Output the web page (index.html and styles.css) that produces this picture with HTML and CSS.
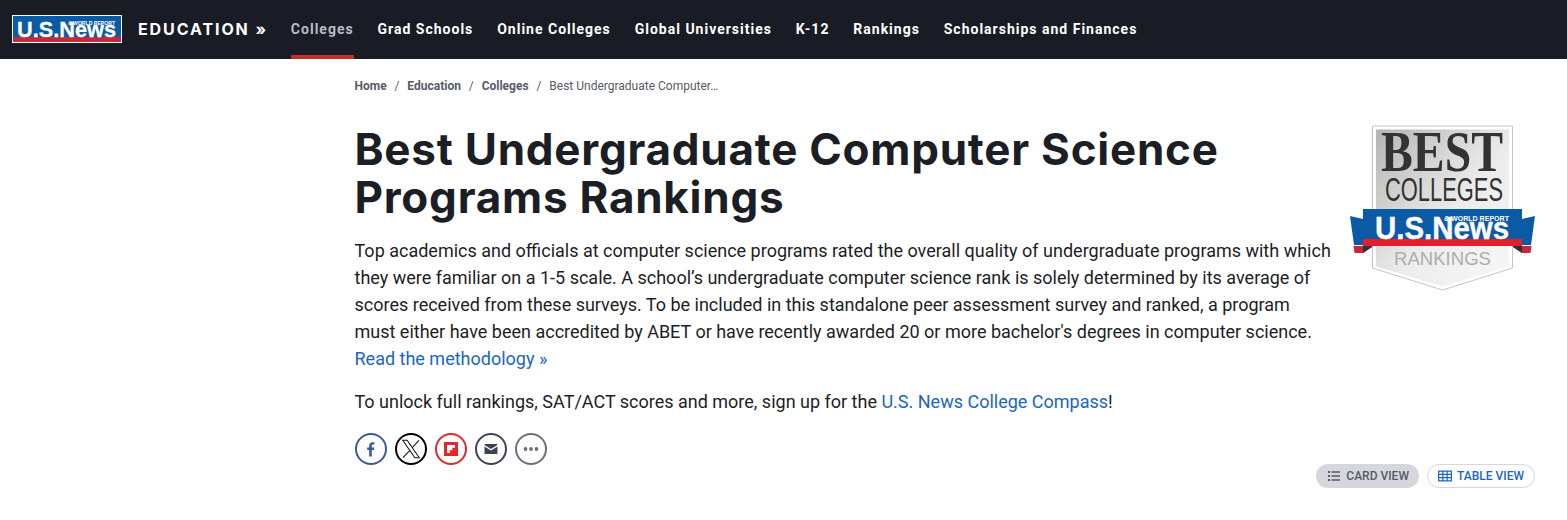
FILE: index.html
```html
<!DOCTYPE html>
<html lang="en">
<head>
    <meta charset="UTF-8">
    <title>Best Undergraduate Computer Science Programs Rankings</title>
    <link rel="stylesheet" href="styles.css">
</head>
<body>
    <header class="topbar">
        <svg class="logo" width="110" height="28" viewBox="0 0 110 28">
            <rect x="0.5" y="0.5" width="109" height="27" fill="#0b5aa5" stroke="#fff"/>
            <rect x="1" y="22" width="108" height="5" fill="#c8283a"/>
            <text x="5" y="22" class="logo-main" textLength="99" lengthAdjust="spacingAndGlyphs">U.S.News</text>
            <text x="56" y="10" class="logo-small" textLength="47" lengthAdjust="spacingAndGlyphs">&amp; WORLD REPORT</text>
        </svg>
        <div class="section-name">EDUCATION »</div>
        <nav class="main-nav">
            <a class="active" href="#">Colleges</a>
            <a href="#">Grad Schools</a>
            <a href="#">Online Colleges</a>
            <a href="#">Global Universities</a>
            <a href="#">K-12</a>
            <a href="#">Rankings</a>
            <a href="#">Scholarships and Finances</a>
        </nav>
    </header>

    <main class="page">
        <div class="breadcrumb">
            <a href="#">Home</a><span class="sep">/</span>
            <a href="#">Education</a><span class="sep">/</span>
            <a href="#">Colleges</a><span class="sep">/</span>
            <span class="current">Best Undergraduate Computer…</span>
        </div>

        <div class="intro">
            <div class="intro-text">
                <h1>Best Undergraduate Computer Science Programs Rankings</h1>
                <p>Top academics and officials at computer science programs rated the overall quality of undergraduate programs with which they were familiar on a 1-5 scale. A school’s undergraduate computer science rank is solely determined by its average of scores received from these surveys. To be included in this standalone peer assessment survey and ranked, a program must either have been accredited by ABET or have recently awarded 20 or more bachelor's degrees in computer science. <a href="#">Read the methodology »</a></p>
                <p>To unlock full rankings, SAT/ACT scores and more, sign up for the <a href="#">U.S. News College Compass</a>!</p>
                <div class="share">
                    <a class="share-btn fb" href="#">
                        <svg width="18" height="18" viewBox="0 0 18 18"><path fill="#3b5998" d="M7.200 16.500V9.900H5.200V7.400h2V5.700C7.200 3.500 8.500 2.200 10.500 2.200c.9 0 1.600.1 1.900.1v2.300h-1.300c-1.100 0-1.300.5-1.300 1.200v1.600h2.500l-.3 2.500H9.800v6.600z"/></svg>
                    </a>
                    <a class="share-btn x" href="#">
                        <svg width="22" height="22" viewBox="0 0 24 24"><path fill="none" stroke="#111" stroke-width="1.100" d="M3 2.500h4.800l13.200 19h-4.800zM20.600 2.500 13.200 10.800M10.800 13.400 3.200 21.500"/></svg>
                    </a>
                    <a class="share-btn flip" href="#">
                        <svg width="14" height="14" viewBox="0 0 14 14"><rect width="14" height="14" fill="#e12828"/><path fill="#fff" d="M3 3h8v2.700H8.300v2.600H5.700V11H3z"/></svg>
                    </a>
                    <a class="share-btn mail" href="#">
                        <svg width="14" height="12" viewBox="0 0 14 12"><path fill="#3e4354" d="M1.500 1h11c.5 0 1 .4 1 1L7 6 .5 2c0-.6.5-1 1-1zM.5 3.500 7 7.500l6.500-4V10c0 .6-.5 1-1 1h-11c-.5 0-1-.4-1-1z"/></svg>
                    </a>
                    <a class="share-btn more" href="#">
                        <svg width="16" height="4" viewBox="0 0 16 4"><circle cx="2.500" cy="2" r="1.900" fill="#6b6f7b"/><circle cx="8" cy="2" r="1.900" fill="#6b6f7b"/><circle cx="13.500" cy="2" r="1.900" fill="#6b6f7b"/></svg>
                    </a>
                </div>
            </div>

            <div class="side">
                <svg class="badge" width="186" height="166" viewBox="0 0 186 166">
                    <defs>
                        <linearGradient id="silver" x1="0" y1="0" x2="1" y2="1">
                            <stop offset="0" stop-color="#b4b4b2"/>
                            <stop offset="0.55" stop-color="#ececec"/>
                            <stop offset="1" stop-color="#f8f8f8"/>
                        </linearGradient>
                    </defs>
                    <path d="M22.500 1h140v142l-70 22-70-22z" fill="#fff" stroke="#c4c4c4"/>
                    <path d="M26 4.500h133v137l-66.500 20-66.500-20z" fill="url(#silver)"/>
                    <text x="31" y="46" class="badge-best" textLength="122" lengthAdjust="spacingAndGlyphs">BEST</text>
                    <text x="35" y="76" class="badge-colleges" textLength="118" lengthAdjust="spacingAndGlyphs">COLLEGES</text>
                    <path d="M0 91l13 3v26H4z" fill="#0b5aa5"/>
                    <path d="M185 91l-13 3v26h9z" fill="#0b5aa5"/>
                    <path d="M3.500 121H13v1l9 0-9 6H4.500z" fill="#c8283a"/>
                    <path d="M181.500 121H172v1l-9 0 9 6h8.500z" fill="#c8283a"/>
                    <path d="M13 121h9v1l-9 6zM172 121h-9v1l9 6z" fill="#333"/>
                    <rect x="13" y="84" width="159" height="30" fill="#0b5aa5"/>
                    <rect x="13" y="114" width="159" height="7" fill="#e2202c"/>
                    <text x="25" y="114" class="badge-news" textLength="134" lengthAdjust="spacingAndGlyphs">U.S.News</text>
                    <text x="94" y="96" class="badge-small" textLength="65" lengthAdjust="spacingAndGlyphs">&amp; WORLD REPORT</text>
                    <text x="44" y="140" class="badge-rankings" textLength="97" lengthAdjust="spacingAndGlyphs">RANKINGS</text>
                </svg>
                <div class="view-toggle">
                    <a class="view-btn card" href="#">
                        <svg width="12" height="10" viewBox="0 0 12 10"><path fill="#565b69" d="M0 0h2v2H0zM3.500 .2H12v1.600H3.500zM0 4h2v2H0zM3.500 4.200H12v1.600H3.500zM0 8h2v2H0zM3.500 8.200H12v1.600H3.500z"/></svg>
                        CARD VIEW
                    </a>
                    <a class="view-btn table" href="#">
                        <svg width="14" height="12" viewBox="0 0 15 12"><path fill="none" stroke="#1a66c4" stroke-width="1.300" d="M.7.700h13.600v10.600H.7zM.7 4.200h13.600M.7 7.800h13.600M5.200.7v10.600M9.800.7v10.600"/></svg>
                        TABLE VIEW
                    </a>
                </div>
            </div>
        </div>
    </main>
</body>
</html>
```

FILE: styles.css
```css
body {
    margin: 0;
    font-family: Roboto, Arial, sans-serif;
    color: #1c1e26;
    background-color: #fff;
}
a {
    text-decoration: none;
}

/* top bar */
.topbar {
    display: flex;
    align-items: center;
    height: 59px;
    padding-left: 12px;
    background-color: #191c24;
}
.logo {
    display: block;
    margin-top: -2px;
}
.logo-main {
    font-family: "Liberation Sans", Arial, sans-serif;
    font-weight: 700;
    font-size: 22px;
    fill: #fff;
    stroke: #fff;
    stroke-width: 0.3px;
}
.logo-small {
    font-family: "Liberation Sans", Arial, sans-serif;
    font-weight: 700;
    font-size: 5px;
    fill: #fff;
}
.section-name {
    margin-left: 16px;
    margin-top: -2px;
    font-family: Inter, sans-serif;
    font-weight: 700;
    font-size: 16px;
    letter-spacing: 1.9px;
    color: #fff;
    white-space: nowrap;
}
.main-nav {
    display: flex;
    align-self: stretch;
    gap: 23.9px;
    margin-left: 23px;
}
.main-nav a {
    display: flex;
    align-items: center;
    padding-top: 2px;
    box-sizing: border-box;
    font-weight: 700;
    font-size: 14px;
    letter-spacing: 1px;
    color: #fff;
    white-space: nowrap;
    border-bottom: 4px solid transparent;
}
.main-nav a.active {
    color: #b9bcc4;
    border-bottom-color: #c0312c;
}

/* page body */
.page {
    padding: 0 31px 0 354.5px;
}
.breadcrumb {
    display: flex;
    align-items: center;
    height: 16px;
    padding-top: 19px;
    font-size: 12px;
    color: #565b69;
}
.breadcrumb a {
    font-weight: 700;
    color: #565b69;
}
.breadcrumb .sep {
    margin: 0 7.9px;
}
.intro {
    display: flex;
    justify-content: space-between;
    margin-top: 31px;
}
.intro-text {
    flex: none;
    width: 980px;
}
h1 {
    margin: 0 0 16px;
    font-family: Inter, sans-serif;
    font-weight: 700;
    font-size: 44px;
    line-height: 48px;
    letter-spacing: 0.75px;
    color: #1c1e26;
}
p {
    margin: 0 0 16px;
    font-size: 18px;
    line-height: 27px;
}
p a {
    color: #1a66c4;
}
.share {
    display: flex;
    gap: 8px;
    margin-top: 18px;
}
.share-btn {
    display: flex;
    align-items: center;
    justify-content: center;
    width: 32px;
    height: 32px;
    box-sizing: border-box;
    border: 2px solid #000;
    border-radius: 50%;
}
.share-btn.fb { border-color: #3b5998; }
.share-btn.x { border-color: #000; }
.share-btn.flip { border-color: #e12828; }
.share-btn.mail { border-color: #3e4354; }
.share-btn.more { border-color: #6b6f7b; }

/* badge + view buttons */
.side {
    flex: none;
    display: flex;
    flex-direction: column;
    align-items: flex-end;
    width: 186px;
}
.badge {
    display: block;
    flex: none;
}
.badge-best {
    font-family: "Liberation Serif", serif;
    font-weight: 700;
    font-size: 56px;
    fill: #333;
}
.badge-colleges {
    font-family: "Liberation Sans", sans-serif;
    font-size: 33px;
    fill: #333;
}
.badge-news {
    font-family: "Liberation Sans", sans-serif;
    font-weight: 700;
    font-size: 31px;
    fill: #fff;
    stroke: #fff;
    stroke-width: 0.4px;
}
.badge-small {
    font-family: "Liberation Sans", sans-serif;
    font-weight: 700;
    font-size: 6.5px;
    fill: #fff;
}
.badge-rankings {
    font-family: "Liberation Sans", sans-serif;
    font-size: 18px;
    fill: #adadad;
}
.view-toggle {
    flex: none;
    display: flex;
    gap: 8px;
    margin-top: 173px;
    margin-right: 1px;
}
.view-btn {
    display: flex;
    align-items: center;
    gap: 6px;
    height: 24px;
    padding: 0 10px 0 12px;
    box-sizing: border-box;
    border-radius: 12px;
    font-weight: 500;
    font-size: 12px;
    white-space: nowrap;
}
.view-btn.card {
    background-color: #d5d7dd;
    color: #565b69;
}
.view-btn.table {
    gap: 5px;
    padding-left: 10px;
    background-color: #fff;
    border: 1px solid #d5d7dd;
    color: #1a66c4;
}
```
